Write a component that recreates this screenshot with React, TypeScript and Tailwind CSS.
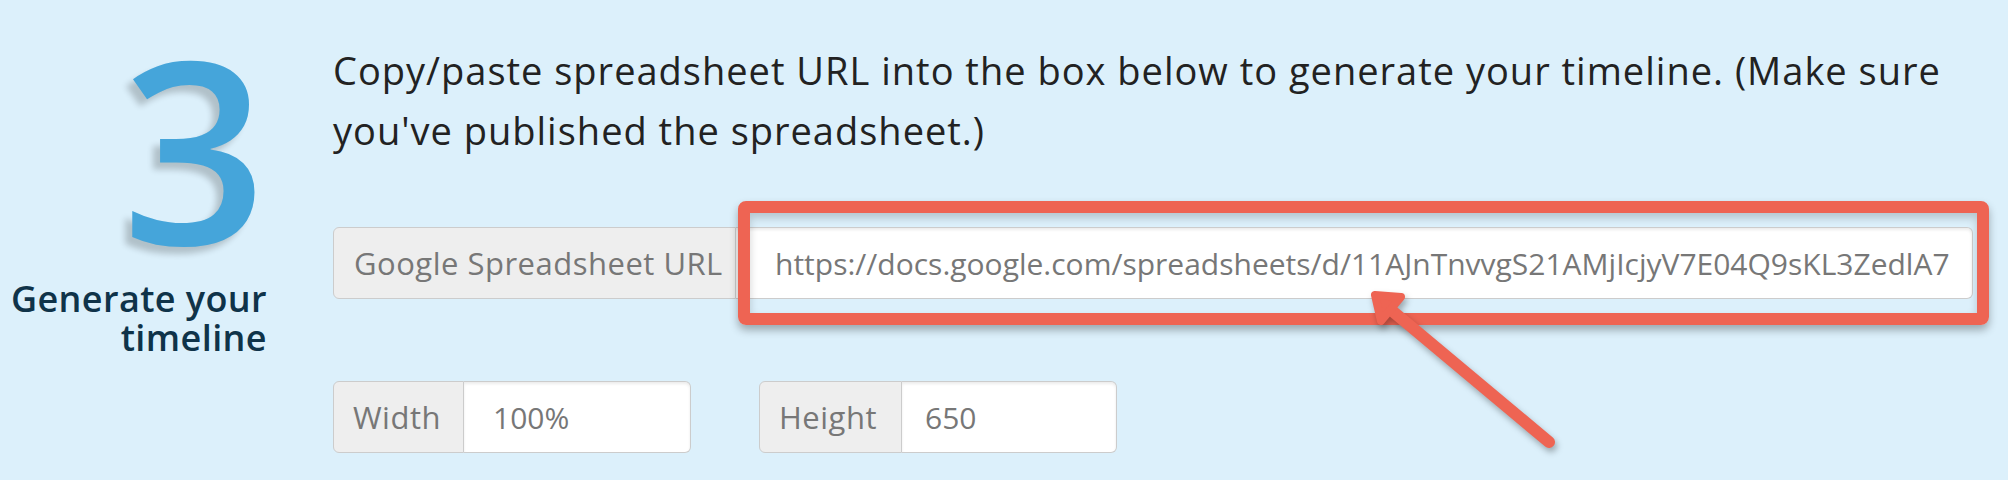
import React from "react";

const url = "https://docs.google.com/spreadsheets/d/11AJnTnvvgS21AMjIcjyV7E04Q9sKL3ZedlA7";

const Addon = ({ label, value, labelW, inputW, pad }: { label: string; value: string; labelW: string; inputW: string; pad: string }) => (
  <div className="flex h-[72px]">
    <div className={`${labelW} flex items-center pl-[19px] bg-[#eeeeee] border border-[#cccccc] rounded-l-[6px] text-[31px] tracking-[0.5px] text-[#777777]`}>
      {label}
    </div>
    <div className={`${inputW} ${pad} flex items-center bg-white border border-l-0 border-[#cccccc] rounded-r-[6px] shadow-[inset_0_2px_3px_rgba(0,0,0,0.08)] text-[30px] text-[#777777]`}>
      {value}
    </div>
  </div>
);

export default function App() {
  return (
    <div className="relative w-[2008px] h-[480px] overflow-hidden bg-[#dcf0fb] font-['Open_Sans',sans-serif]">
      <div className="flex">
        <div className="w-[267px] flex flex-col items-end">
          <div className="mt-[22px] text-[254px] leading-[250px] font-semibold text-[#45a5da] [text-shadow:-7px_7px_6px_rgba(0,0,0,0.2)]">
            3
          </div>
          <div className="mt-[7px] text-right text-[36px] leading-[39px] font-semibold tracking-[0.4px] text-[#0f3349]">
            Generate your
            <br />
            timeline
          </div>
        </div>

        <div className="ml-[66px] pt-[40px]">
          <p className="w-[1640px] text-[38px] leading-[60px] tracking-[1px] text-[#222222]">
            Copy/paste spreadsheet URL into the box below to generate your timeline. (Make sure you've published the spreadsheet.)
          </p>

          <div className="mt-[67px] flex h-[72px]">
            <div className="w-[403px] flex items-center pl-[20px] bg-[#eeeeee] border border-[#cccccc] rounded-l-[6px] text-[31px] tracking-[0.5px] text-[#777777] whitespace-nowrap">
              Google Spreadsheet URL
            </div>
            <div className="relative w-[1237px] flex items-center pl-[39px] bg-white border border-l-0 border-[#cccccc] rounded-r-[6px] shadow-[inset_0_2px_3px_rgba(0,0,0,0.08)] text-[30px] text-[#777777] whitespace-nowrap">
              {url}
              <div className="absolute left-[2px] -right-[17px] -top-[27px] -bottom-[27px] border-[12px] border-[#ee6453] rounded-[8px] shadow-[0_5px_9px_rgba(0,0,0,0.3),inset_0_5px_9px_rgba(0,0,0,0.18)]" />
            </div>
          </div>

          <div className="mt-[82px] flex gap-[68px]">
            <Addon label="Width" value="100%" labelW="w-[131px]" inputW="w-[227px]" pad="pl-[29px]" />
            <Addon label="Height" value="650" labelW="w-[143px]" inputW="w-[215px]" pad="pl-[23px]" />
          </div>
        </div>
      </div>

      <svg className="absolute inset-0 pointer-events-none [filter:drop-shadow(2px_4px_3px_rgba(0,0,0,0.3))]" width="2008" height="480" viewBox="0 0 2008 480">
        <line x1="1384" y1="304" x2="1549" y2="442" stroke="#ee6453" strokeWidth="12" strokeLinecap="round" />
        <polygon points="1375,295 1401,297 1381,321" fill="#ee6453" stroke="#ee6453" strokeWidth="8" strokeLinejoin="round" />
      </svg>
    </div>
  );
}
